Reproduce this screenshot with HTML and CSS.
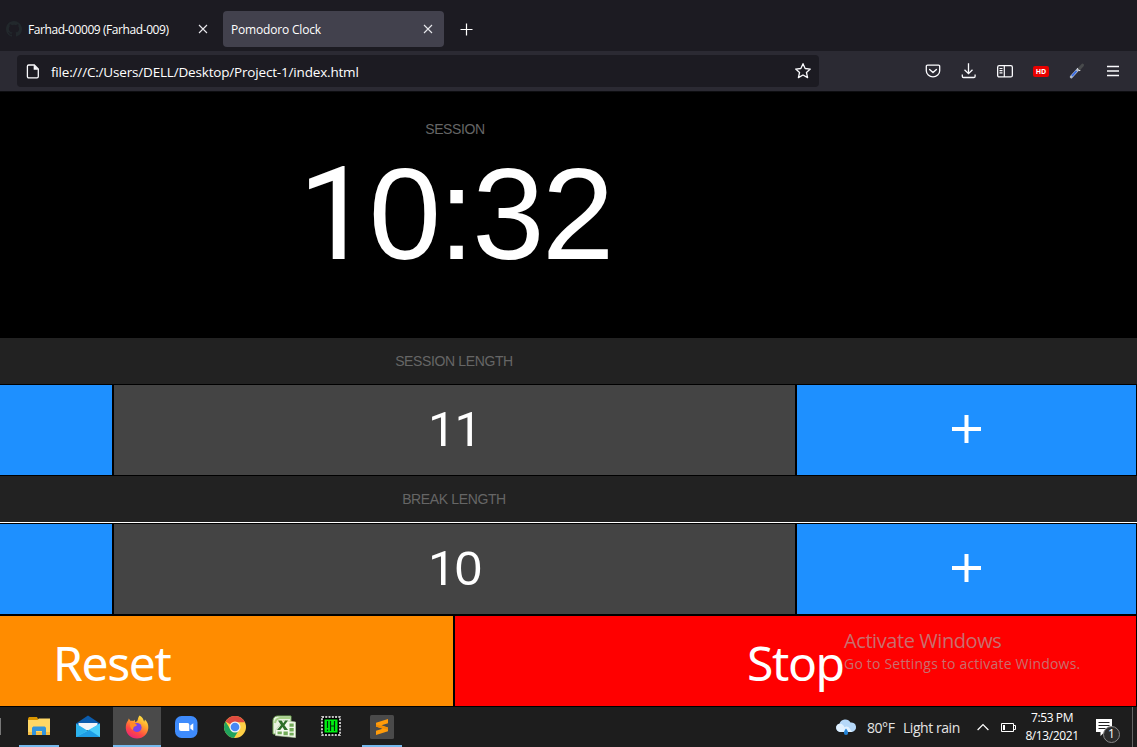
FILE: index.html
```html
<!DOCTYPE html>
<html lang="en">
<head>
<meta charset="utf-8">
<title>Pomodoro Clock</title>
<link rel="stylesheet" href="styles.css">
</head>
<body>
<div class="desktop">
  <header class="tabs">
    <div class="tab tab-idle">
      <svg class="github" width="16" height="16" viewBox="0 0 16 16"><path fill="#22282c" d="M8 0C3.58 0 0 3.58 0 8c0 3.54 2.29 6.53 5.47 7.59.4.07.55-.17.55-.38v-1.49c-2.23.48-2.7-.95-2.7-.95-.36-.92-.89-1.17-.89-1.17-.73-.5.05-.49.05-.49.81.06 1.23.83 1.23.83.72 1.23 1.88.87 2.33.67.07-.52.28-.87.51-1.07-1.78-.2-3.64-.89-3.64-3.95 0-.87.31-1.59.82-2.15-.08-.2-.36-1.02.08-2.12 0 0 .67-.21 2.2.82a7.6 7.6 0 0 1 4 0c1.53-1.04 2.2-.82 2.2-.82.44 1.1.16 1.92.08 2.12.51.56.82 1.27.82 2.15 0 3.07-1.87 3.75-3.65 3.95.29.25.54.73.54 1.48v2.19c0 .21.15.46.55.38A8 8 0 0 0 8 0z"/></svg>
      <span class="tab-title title-idle">Farhad-00009 (Farhad-009)</span>
      <svg class="close" width="10" height="10" viewBox="0 0 10 10"><path d="M1 1l8 8M9 1L1 9" stroke="#e8e8ec" stroke-width="1.1"/></svg>
    </div>
    <div class="tab tab-active">
      <span class="tab-title title-active">Pomodoro Clock</span>
      <svg class="close" width="10" height="10" viewBox="0 0 10 10"><path d="M1 1l8 8M9 1L1 9" stroke="#e8e8ec" stroke-width="1.1"/></svg>
    </div>
    <svg class="new-tab" width="13" height="13" viewBox="0 0 13 13"><path d="M6.5 .5v12M.5 6.5h12" stroke="#fff" stroke-width="1.2"/></svg>
  </header>
  <nav class="toolbar">
    <div class="urlbar">
      <svg width="14" height="15" viewBox="0 0 14 15"><path d="M2.7 1h5.6L12.3 5v7.6a1.3 1.3 0 0 1-1.3 1.3H2.7a1.3 1.3 0 0 1-1.3-1.3V2.3A1.3 1.3 0 0 1 2.700 1z" fill="none" stroke="#fbfbfe" stroke-width="1.3"/><path d="M7.700 1v4.700h4.600z" fill="#fbfbfe"/></svg>
      <span class="url">file:///C:/Users/DELL/Desktop/Project-1/index.html</span>
      <svg class="star" width="18" height="18" viewBox="0 0 18 18"><path d="M9 1.700l2.150 4.800 5.150.55-3.850 3.450 1.150 5.100L9 13l-4.600 2.600 1.150-5.100L1.700 7.050l5.150-.55z" fill="none" stroke="#fbfbfe" stroke-width="1.300" stroke-linejoin="round"/></svg>
    </div>
    <div class="tools">
      <svg width="16" height="16" viewBox="0 0 16 16"><path d="M2.500 2.200h11A1.200 1.200 0 0 1 14.700 3.400v4.300a6.700 6.200 0 0 1-13.400 0V3.400A1.200 1.200 0 0 1 2.500 2.200z" fill="none" stroke="#fbfbfe" stroke-width="1.300"/><path d="M4.600 6.500L8 9.600l3.400-3.100" fill="none" stroke="#fbfbfe" stroke-width="1.400" stroke-linecap="round" stroke-linejoin="round"/></svg>
      <svg width="16" height="16" viewBox="0 0 16 16"><path d="M7.500 .3v10.200M3.500 6.700L7.500 10.700l4-4M1.300 11.500v1.800a1.200 1.200 0 0 0 1.200 1.200h10.400a1.200 1.200 0 0 0 1.200-1.200v-1.800" fill="none" stroke="#fbfbfe" stroke-width="1.300"/></svg>
      <svg width="16" height="16" viewBox="0 0 16 16"><rect x=".65" y="2.650" width="14.700" height="11.300" rx="1.500" fill="none" stroke="#fbfbfe" stroke-width="1.300"/><path d="M7.300 2.500v11.500M2.500 5.500h3M2.500 7.700h3M2.500 9.900h3" stroke="#fbfbfe" stroke-width="1.200"/></svg>
      <span class="hd">HD</span>
      <svg width="16" height="16" viewBox="0 0 16 16"><path d="M2.200 14L9 6.500" stroke="#aeb9cd" stroke-width="2.800" stroke-linecap="round"/><path d="M3 13l4.500-5" stroke="#3469e8" stroke-width="1.700"/><path d="M8.500 5.200l2.600 2.600" stroke="#e4e4e6" stroke-width="1.400"/><path d="M10.500 5.500l3-3.300" stroke="#484a4c" stroke-width="3" stroke-linecap="round"/></svg>
      <svg width="16" height="16" viewBox="0 0 16 16"><path d="M2 3.500h12M2 8h12M2 12.500h12" stroke="#fbfbfe" stroke-width="1.300"/></svg>
    </div>
  </nav>

  <main class="clock">
    <section class="display">
      <div class="label">SESSION</div>
      <div class="time"><span class="one">1</span>0:32</div>
    </section>
    <div class="heading"><span class="label">SESSION LENGTH</span></div>
    <div class="stepper">
      <div class="step"></div>
      <div class="value"><span class="number"><span class="one">11</span></span></div>
      <div class="step"><svg class="plus" width="29" height="28" viewBox="0 0 29 28"><path d="M14.500 0v28M0 14h29" stroke="#fff" stroke-width="4"/></svg></div>
    </div>
    <div class="heading heading-ruled"><span class="label">BREAK LENGTH</span></div>
    <div class="stepper stepper-last">
      <div class="step"></div>
      <div class="value"><span class="number"><span class="one">1</span>0</span></div>
      <div class="step"><svg class="plus" width="29" height="28" viewBox="0 0 29 28"><path d="M14.500 0v28M0 14h29" stroke="#fff" stroke-width="4"/></svg></div>
    </div>
    <div class="actions">
      <div class="reset"><span>Reset</span></div>
      <div class="stop"><span>Stop</span>
        <div class="watermark"><div class="wm-title">Activate Windows</div><div class="wm-text">Go to Settings to activate Windows.</div></div>
      </div>
    </div>
  </main>

  <footer class="taskbar">
    <div class="edge"></div>
    <div class="app explorer running">
      <svg width="24" height="24" viewBox="0 0 24 24"><path d="M1 3.500L2 2h8l1 2v3H1z" fill="#d99500"/><path d="M1 5h9.500l1.300-1.500H23V20H1z" fill="#ffd765"/><path d="M1 17h22v3H1z" fill="#f5bd45"/><path d="M5 20v-7.200l1.300-1.300h11.400l1.300 1.300V20h-4v-4H9v4z" fill="#3293dc"/></svg>
    </div>
    <div class="app mail">
      <svg width="24" height="24" viewBox="0 0 24 24"><path d="M0 8.500L12 .5l12 8v5H0z" fill="#0b5cad"/><path d="M2.500 8h19v7h-19z" fill="#f3f5f8"/><path d="M0 8.500l12 7.500 12-7.500V22H0z" fill="#2cb3ee"/><path d="M0 22l24-13.500V22z" fill="#48cdfa"/><path d="M0 22l13.500-7L24 22z" fill="#1d9ce4"/></svg>
    </div>
    <div class="app firefox running active">
      <svg width="24" height="24" viewBox="0 0 24 24"><defs><linearGradient id="ff" x1=".8" y1="0" x2=".25" y2="1"><stop offset="0" stop-color="#fff04a"/><stop offset=".35" stop-color="#ffa52b"/><stop offset=".7" stop-color="#ff4a42"/><stop offset="1" stop-color="#e8207e"/></linearGradient></defs><path d="M14.500.5c3 1.700 4 3.800 4.600 6.200l.9-2.200c2.500 2.500 3.500 5.500 3.300 8.500C22.800 19 18.300 23.500 12 23.500S1 19 .8 13c-.1-3 .7-5.500 2.300-7.400l.7-2.100 1.600 2.300c1-.2 2-.1 3 .3l1.300-1.400.6 2.600c1.200-.7 2-1.200 2.300-2.100.5-1.500.7-3.200 1.900-4.700z" fill="url(#ff)"/><circle cx="12" cy="12.500" r="4.600" fill="#7945e8"/><path d="M5 8c3-1 6 .5 7 2.200-1 1-2 .9-3 1.600-.8.6-.4 2.500-1.400 3.200C5.500 13.500 4.500 11 5 8z" fill="#ff8b26"/></svg>
    </div>
    <div class="app zoom">
      <svg width="24" height="24" viewBox="0 0 24 24"><rect x="1" y="1" width="22.500" height="22" rx="6.500" fill="#3e8bfc"/><path d="M5 8h8.500a1.800 1.800 0 0 1 1.800 1.800V16H7a2 2 0 0 1-2-2zM16.300 10.600l3-2.300v7.400l-3-2.300z" fill="#fff"/></svg>
    </div>
    <div class="app chrome">
      <svg width="24" height="24" viewBox="0 0 24 24"><circle cx="12" cy="12" r="11" fill="#ffcf45"/><path d="M12 12L2.500 6.500a11 11 0 0 1 19 0L21.800 7.200H12z" fill="#df4b40"/><path d="M2.500 6.500A11 11 0 0 0 11 23l5.200-8.500L12 12 7.500 14.500z" fill="#20a35d"/><circle cx="12" cy="12" r="5.500" fill="#f1f3f4"/><circle cx="12" cy="12" r="4.300" fill="#4688f4"/></svg>
    </div>
    <div class="app excel">
      <svg width="24" height="24" viewBox="0 0 24 24"><path d="M1 19V5.500C1 3 3 1 5.500 1H19v18z" fill="#e9f3df" stroke="#73a955"/><path d="M3 8c.5-3 2-4.500 5-5h10" fill="none" stroke="#a8d088" stroke-width="2"/><path d="M11 5.500l12.500 1.500V22.500L3.500 20.500v-5z" fill="#f4faee" stroke="#b5cfa5" stroke-width=".7"/><path d="M6 5.500h3.600l1.600 2.800 2-2.800H16l-3.500 4.700 3.500 4.800h-3.600l-1.900-3-2.300 3H5l4-5z" fill="#2e702a"/><path d="M17.500 8.500h4.200v3.200h-4.200zM17.500 13h4.200v3.400h-4.200zM11.500 16.500h4.300v3.700h-4.300zM5.500 16.500h4.300v2.700H5.500zM17.500 17.800h4.200v2.700h-4.200z" fill="#72ab58"/></svg>
    </div>
    <div class="app chip">
      <svg width="20" height="20" viewBox="0 0 20 20"><rect x="1" y="1" width="18" height="18" fill="#000" stroke="#fff" stroke-width="1.500" stroke-dasharray="2 1.270"/><rect x="3.500" y="3.500" width="13" height="13" fill="#00ef12"/><path d="M6.500 5v7M6.500 13.500v1.500M9.500 5v10M13.500 5v10M9.500 10h4" stroke="#00300a" stroke-width="1.200"/></svg>
    </div>
    <div class="app sublime running">
      <svg width="24" height="24" viewBox="0 0 24 24"><rect width="24" height="24" rx="1.500" fill="#4a4a4a"/><path d="M18 4v4.300l-6.500 2L18 12.500v3.700L6 20v-4.300l6.500-2L6 11.500V7.700z" fill="#ff9b0a"/><path d="M6 11.700V9.500l12 3.200v2z" fill="#f08c05"/></svg>
    </div>
    <div class="tray">
      <svg class="weather" width="22" height="17" viewBox="0 0 22 17"><path d="M5 13a4.200 4.200 0 0 1-.5-8.300A6 6 0 0 1 15.500 3.500 4.800 4.800 0 0 1 17 13z" fill="#b5d8f8"/><path d="M3 12a4 4 0 0 1 1-7.200c3-.6 5 1.500 5.500 3.500 2-1.500 4-.5 5 1L17 13H5z" fill="#e0f1ff"/><path d="M11 9.500c1.500 2 2.100 3.200 2.100 4.400a2.100 2.100 0 0 1-4.200 0c0-1.200.6-2.400 2.100-4.400z" fill="#2384d7"/></svg>
      <span class="temp">80°F</span><span class="rain">Light rain</span>
      <svg class="chevron" width="12" height="8" viewBox="0 0 12 8"><path d="M.6 7L6 1.500 11.400 7" fill="none" stroke="#fff" stroke-width="1.200"/></svg>
      <svg class="battery" width="15" height="9" viewBox="0 0 15 9"><path d="M.5.5h12v8H.5zM13 2.500h1.500v4H13" fill="none" stroke="#fff"/><path d="M2 2h2v5H2z" fill="#fff"/></svg>
      <div class="datetime"><div class="hour">7:53 PM</div><div class="date">8/13/2021</div></div>
      <div class="notice">
        <svg width="16" height="17" viewBox="0 0 16 17"><path d="M0 0h16v13H8.500L4.500 17v-4H0z" fill="#fff"/><path d="M2.500 3.500h11M2.500 6.500h11M2.500 9.500h7" stroke="#222" stroke-width="1.200"/></svg>
        <span class="count">1</span>
      </div>
      <div class="peek"></div>
    </div>
  </footer>
</div>
</body>
</html>
```
FILE: styles.css
```css
* { box-sizing: border-box; }
body { margin: 0; background: #000; }
.desktop { width: 1137px; height: 747px; display: flex; flex-direction: column; overflow: hidden; font-family: "Open Sans", "Noto Sans", sans-serif; color: #fff; white-space: nowrap; }
svg { display: block; flex: none; }

.tabs { height: 51px; background: #1c1b22; display: flex; align-items: center; padding-top: 7px; flex: none; }
.tab { height: 36px; display: flex; align-items: center; flex: none; font-size: 12px; }
.tab-idle { width: 223px; padding: 0 15px 0 6px; }
.tab-active { width: 221px; padding: 0 11px 0 8px; background: #42414d; border-radius: 4px; }
.github { margin-right: 6px; }
.tab .close { margin-left: auto; }
.title-idle { letter-spacing: -0.42px; padding-top: 1px; }
.title-active { letter-spacing: -0.18px; padding-top: 1px; }
.new-tab { margin-left: 16px; }

.toolbar { height: 41px; background: #2b2a33; border-bottom: 1px solid #0d0d10; display: flex; align-items: center; padding: 0 16px 0 17px; flex: none; }
.urlbar { width: 802px; height: 32px; background: #1c1b22; border-radius: 4px; display: flex; align-items: center; padding: 0 7px 0 9px; }
.url { font-size: 13.5px; margin-left: 11px; letter-spacing: -0.18px; padding-top: 2px; }
.star { margin-left: auto; }
.tools { margin-left: auto; display: flex; gap: 20px; align-items: center; }
.hd { width: 16px; height: 11px; border-radius: 2px; background: #e80000; font-size: 7px; line-height: 11px; font-weight: 700; text-align: center; }

.clock { height: 615px; flex: none; font-family: "Liberation Sans", Arial, sans-serif; }
.label { color: #666; font-size: 14px; line-height: 16px; letter-spacing: -0.37px; }
.display { height: 246px; width: 910px; padding-top: 29px; text-align: center; }
.time { font-size: 130px; line-height: 150px; letter-spacing: -2.5px; margin-top: 2px; }
.one { font-family: Roboto, "Liberation Sans", sans-serif; }
.heading { height: 46px; background: #222; display: flex; align-items: center; justify-content: center; padding-right: 229px; }
.heading-ruled { height: 47px; border-bottom: 1px solid #fff; }
.stepper { height: 92px; border: solid #000; border-width: 1px 1px 1px 0; display: grid; grid-template-columns: 112px 681px 339px; gap: 2px; }
.step { background: #1e90ff; display: flex; align-items: center; justify-content: center; padding-bottom: 2px; }
.value { background: #444; display: flex; align-items: center; justify-content: center; font-size: 49px; letter-spacing: -1px; }
.number { line-height: 56px; padding-bottom: 2px; }
.actions { height: 92px; border: solid #000; border-width: 1px 1px 1px 0; display: grid; grid-template-columns: 453px 681px; gap: 2px; font-family: "Noto Sans", sans-serif; font-size: 48px; line-height: 93px; letter-spacing: -1.4px; }
.reset { background: #ff8c00; padding-left: 53px; height: 90px; }
.stop { background: #f00; display: flex; padding-left: 292px; position: relative; height: 90px; }
.watermark { position: absolute; left: 389px; top: 12px; color: #c96e6e; font-family: "Open Sans", sans-serif; }
.wm-title { font-size: 20px; line-height: 25px; letter-spacing: -0.42px; }
.wm-text { font-size: 14px; line-height: 21px; letter-spacing: 0.2px; }

.taskbar { height: 40px; background: #1d1d1d; display: flex; flex: none; }
.edge { width: 1px; height: 17px; margin-top: 11px; background: #777; }
.app { height: 40px; width: 40px; display: flex; align-items: center; justify-content: center; flex: none; }
.running { border-bottom: 2px solid #76b9ed; padding-top: 2px; }
.explorer { margin-left: 18px; }
.mail { margin-left: 9px; }
.firefox { margin-left: 5px; }
.active { width: 48px; background: #4a4a4a; }
.zoom { margin-left: 5px; }
.chrome { margin-left: 9px; }
.excel { margin-left: 9px; }
.chip { margin-left: 7px; padding-bottom: 3px; }
.sublime { margin-left: 11px; }
.tray { margin-left: auto; display: flex; align-items: center; }
.temp, .rain { font-size: 14px; letter-spacing: -0.45px; color: #e4e4e4; }
.weather { margin-right: 10px; }
.temp { width: 36px; }
.rain { width: 74px; }
.battery { margin-left: 12px; }
.datetime { width: 70px; text-align: center; font-size: 12px; line-height: 18px; margin-left: 1px; letter-spacing: -0.4px; }
.notice { position: relative; margin-left: 9px; }
.count { position: absolute; left: 7px; top: 7px; width: 17px; height: 17px; border: 1px solid #888; border-radius: 50%; background: #2b2b2b; font-size: 12px; line-height: 14px; text-align: center; }
.peek { width: 5px; height: 40px; border-left: 1px solid #666; margin-left: 20px; }
```
